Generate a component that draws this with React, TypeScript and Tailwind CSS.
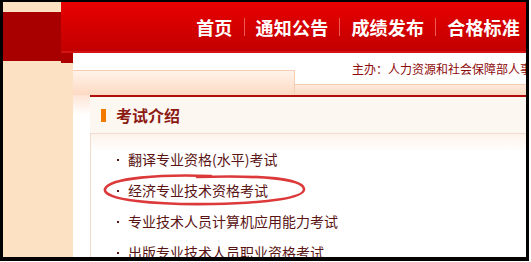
const navItems = ['首页', '通知公告', '成绩发布', '合格标准']

const exams = [
  '翻译专业资格(水平)考试',
  '经济专业技术资格考试',
  '专业技术人员计算机应用能力考试',
  '出版专业技术人员职业资格考试',
]

export default function App() {
  return (
    <div className="w-[531px] h-[262px] bg-white overflow-hidden [font-family:'Noto_Sans_CJK_SC','Noto_Sans',sans-serif]">
      <div className="w-[529px] h-[261px] border-black border-l-[3px] border-t-2 border-r-[3px] border-b-4 overflow-hidden flex bg-[#fde1c3]">
        {/* left strip */}
        <div className="w-[58px] shrink-0 flex flex-col">
          <div className="h-[10px] shrink-0 bg-[#fde1c3]" />
          <div className="h-[49px] shrink-0 bg-[#a80000]" />
          <div className="flex-1 bg-[#fde1c3]" />
        </div>

        <div className="flex-1 flex flex-col min-w-0">
          {/* header */}
          <div className="h-[51px] shrink-0 bg-gradient-to-b from-[#e80000] to-[#c20000] border-b-2 border-[#d41414] flex items-center justify-end pr-[6px]">
            {navItems.map((item, i) => (
              <div key={item} className="flex items-center">
                {i > 0 && <span className="w-px h-[18px] bg-[#ee5a5a] mx-[11px]" />}
                <span className="text-[18px] leading-none font-bold text-white tracking-[0.2px]">{item}</span>
              </div>
            ))}
          </div>

          <div className="flex-1 flex min-h-0">
            <div className="w-[12px] shrink-0 flex flex-col">
              <div className="h-[10px] shrink-0 bg-[#ac0000]" />
              <div className="flex-1 bg-[#fde1c3]" />
            </div>

            {/* main panel */}
            <div className="flex-1 bg-white flex flex-col min-w-0">
              <div className="h-[42px] shrink-0 flex">
                <div className="w-[222px] shrink-0 flex flex-col">
                  <div className="h-[17px] shrink-0 bg-white" />
                  <div className="flex-1 bg-gradient-to-b from-[#fff3ea] to-[#fdd9c2] border-t border-r border-[#f6cdb2]" />
                </div>
                <div className="flex-1 flex flex-col min-w-0">
                  <div className="h-[31px] shrink-0 bg-white flex items-center pl-[57px] whitespace-nowrap overflow-hidden">
                    <span className="text-[12px] leading-none text-[#8e0a0a]">主办：人力资源和社会保障部人事</span>
                  </div>
                  <div className="flex-1 bg-gradient-to-b from-[#fee9dc] to-[#fdd9c2] border-t border-[#f6cdb2]" />
                </div>
              </div>

              <div className="flex-1 flex min-h-0">
                <div className="w-[17px] shrink-0 bg-gradient-to-b from-[#fde4d4] to-white to-[20px]" />
                <div className="flex-1 flex flex-col min-w-0 min-h-0">
                  <div className="h-[2px] shrink-0 bg-[#b00c0c]" />
                  <div className="h-[36px] shrink-0 bg-[#fdf7f2] flex items-center pl-[11px]">
                    <span className="w-[5px] h-[13px] bg-[#f27a00]" />
                    <span className="ml-[10px] text-[16px] leading-none font-bold text-[#8c1a14]">考试介绍</span>
                  </div>
                  <div className="relative flex-1 min-h-0 overflow-hidden border-l border-t border-[#f1dccf] bg-gradient-to-b from-[#fdf3ec] to-white to-[18px] pt-[10px]">
                    {exams.map((e) => (
                      <div key={e} className="h-[31px] shrink-0 flex items-center pl-[26px] text-[14px] text-[#5a1414] whitespace-nowrap">
                        <span className="w-[2px] h-[2px] bg-[#5a1414] mr-[9px] shrink-0" />
                        <span>{e}</span>
                      </div>
                    ))}
                    <svg className="absolute left-[10px] top-[39px]" width="206" height="34" viewBox="0 0 206 34" fill="none">
                      <path
                        d="M110 3 C60 1 8 5 4 16 C1 27 55 32 112 31 C165 30 204 25 203 16 C202 6 160 2 96 4"
                        stroke="#dc3a3a"
                        strokeWidth="2.6"
                        strokeLinecap="round"
                      />
                    </svg>
                  </div>
                </div>
              </div>
            </div>
          </div>
        </div>
      </div>
    </div>
  )
}
